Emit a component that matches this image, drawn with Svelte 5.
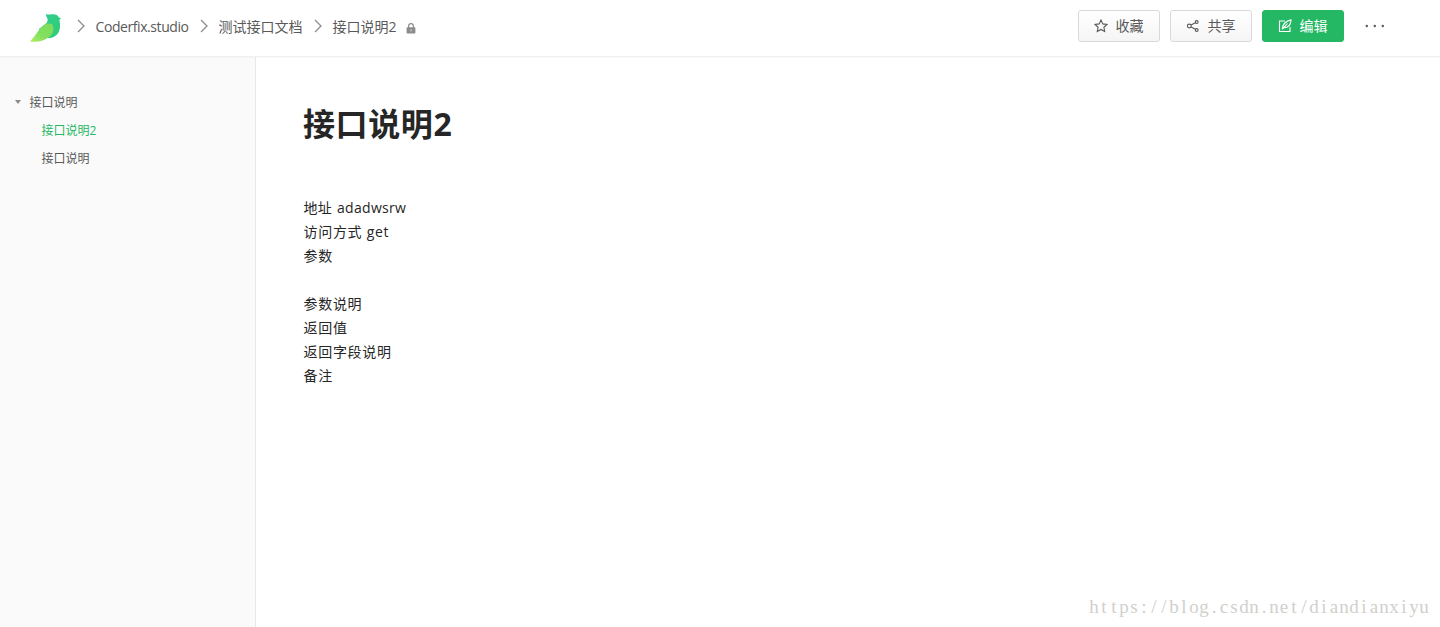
<script lang="ts">
	const crumbs = ['Coderfix.studio', '测试接口文档', '接口说明2'];

	const title = '接口说明2';

	const toc = [
		{ label: '接口说明', level: 0, active: false },
		{ label: '接口说明2', level: 1, active: true },
		{ label: '接口说明', level: 1, active: false }
	];

	const lines = ['地址 adadwsrw', '访问方式 get', '参数', '', '参数说明', '返回值', '返回字段说明', '备注'];

	const watermark = 'https://blog.csdn.net/diandianxiyu';
	// one 10px cell per character
	const cells = [...watermark].map((_, i) => i * 10 + 5).join(' ');
</script>

<div class="page">
	<header class="header">
		<svg class="logo" width="32" height="32" viewBox="0 0 32 32">
			<defs>
				<linearGradient id="body" x1="0" y1="0" x2="1" y2="1">
					<stop offset="0" stop-color="#2fce94" />
					<stop offset="1" stop-color="#31cc72" />
				</linearGradient>
				<linearGradient id="wing" x1="1" y1="0" x2="0" y2="1">
					<stop offset="0" stop-color="#7ddc5c" />
					<stop offset="0.6" stop-color="#83e05f" />
					<stop offset="1" stop-color="#b5ee62" />
				</linearGradient>
			</defs>
			<path
				fill="url(#body)"
				d="M15.800 1.900c2 .9 3.700.6 5.600.4 3.500-.5 6.300.1 7.400 3.200l2.500.8c-1.400.6-1.900 1.200-1.800 2.300.1 1.400.6 2.900.6 5.400 0 6.500-4.500 11.900-10.600 12H9V17l7-5.500c1.200-1.200 1.900-2.700 1.600-4.200C17.300 5.500 16 4.200 15.800 1.900z"
			/>
			<path
				fill="url(#wing)"
				d="M0 29.600C4 25.500 7 20.500 10.500 16.300L15.200 11.900c2.300-.7 4.900-.5 7 .3 2 3.500 1.600 7.300-.8 10.500C17.500 27.300 9.500 30.900 0 29.600z"
			/>
		</svg>

		<nav class="crumbs">
			{#each crumbs as crumb, index}
				<svg class="crumbs__arrow" width="8" height="14" viewBox="0 0 8 14">
					<path d="M1 1l6 6-6 6" />
				</svg>
				<span class="crumbs__item" class:crumbs__item--space={index === 0}>{crumb}</span>
			{/each}
			<svg class="lock" width="10" height="11" viewBox="0 0 10 11">
				<path d="M2.600 5V3.100a2.400 2.400 0 0 1 4.800 0V5" fill="none" stroke="#8c8c8c" stroke-width="1.200" />
				<rect x="0.600" y="4.300" width="8.800" height="6.200" rx="0.800" fill="#8c8c8c" />
				<path d="M5 6.300v2" stroke="#fff" stroke-width="0.800" />
			</svg>
		</nav>

		<div class="actions">
			<button class="btn">
				<svg width="14" height="14" viewBox="0 0 14 14">
					<path d="M7 1l1.800 3.900 4.200.5-3.100 2.900.8 4.200L7 10.400l-3.700 2.100.8-4.200L1 5.400l4.200-.5z" />
				</svg>
				<span>收藏</span>
			</button>
			<button class="btn">
				<svg width="14" height="14" viewBox="0 0 14 14">
					<circle cx="3.300" cy="7" r="1.900" />
					<circle cx="10.700" cy="3" r="1.400" />
					<circle cx="10.700" cy="11" r="1.400" />
					<path d="M5 6.100l4.400-2.400M5 7.900l4.400 2.400" />
				</svg>
				<span>共享</span>
			</button>
			<button class="btn btn--primary">
				<svg width="14" height="14" viewBox="0 0 14 14">
					<path d="M7 2H1.500v10.500H12V8M4.300 10.300C4.500 6 7 2.300 13 .9c-.2 4.800-2.600 7.600-7 7.700M4.300 10.300L9.500 4.500" />
				</svg>
				<span>编辑</span>
			</button>
			<svg class="more" width="20" height="4" viewBox="0 0 20 4">
				<circle cx="1.800" cy="2" r="1.200" />
				<circle cx="9.800" cy="2" r="1.200" />
				<circle cx="17.800" cy="2" r="1.200" />
			</svg>
		</div>
	</header>

	<div class="main">
		<aside class="sidebar">
			<ul class="toc">
				{#each toc as item}
					<li class="toc__item" class:toc__item--child={item.level > 0} class:toc__item--active={item.active}>
						{#if item.level === 0}
							<span class="toc__caret"></span>
						{/if}
						{item.label}
					</li>
				{/each}
			</ul>
		</aside>

		<article class="doc">
			<h1>{title}</h1>
			{#each lines as line, index}
				<p class:tight={index === 0}>{line}</p>
			{/each}
		</article>
	</div>

	<svg class="watermark" width="340" height="28">
		<text x={cells} y="18">{watermark}</text>
	</svg>
</div>

<style>
	:global(body) {
		margin: 0;
		background: #fff;
	}

	.page {
		position: relative;
		display: flex;
		flex-direction: column;
		height: 627px;
		overflow: hidden;
		font-family: 'Open Sans', 'Noto Sans CJK SC', sans-serif;
		font-size: 14px;
		color: #595959;
	}

	.header {
		display: flex;
		align-items: center;
		box-sizing: border-box;
		height: 57px;
		padding: 0 55px 4px 30px;
		border-bottom: 1px solid #f0f0f0;
		box-shadow: 0 1px 1px rgba(0, 0, 0, 0.02);
		z-index: 1;
	}

	.logo {
		margin-top: 3px;
	}

	.crumbs {
		display: flex;
		align-items: center;
		margin-left: 14.5px;
	}

	.crumbs__arrow {
		margin-right: 11px;
		fill: none;
		stroke: #8c8c8c;
		stroke-width: 1.3;
	}

	.crumbs__item {
		margin: 2px 11px 0 0;
		line-height: 20px;
		white-space: nowrap;
	}

	.crumbs__item--space {
		letter-spacing: -0.42px;
	}

	.lock {
		margin: 4px 0 0 -2px;
	}

	.actions {
		display: flex;
		align-items: center;
		gap: 10px;
		margin-left: auto;
	}

	.btn {
		display: flex;
		align-items: center;
		justify-content: center;
		gap: 8px;
		box-sizing: border-box;
		width: 82px;
		height: 32px;
		padding: 0 1px 0 0;
		border: 1px solid #d9d9d9;
		border-radius: 3px;
		background: linear-gradient(#fff, #f5f5f5);
		font: inherit;
		line-height: 20px;
		color: #595959;
	}

	.btn svg {
		fill: none;
		stroke: currentColor;
		stroke-width: 1.1;
	}

	.btn--primary {
		border-color: #25b864;
		background: #25b864;
		color: #fff;
	}

	.more {
		margin-left: 11px;
		fill: #595959;
	}

	.main {
		display: flex;
		flex: 1;
	}

	.sidebar {
		box-sizing: border-box;
		width: 256px;
		padding-top: 32px;
		border-right: 1px solid #e8e8e8;
		background: #fafafa;
	}

	.toc {
		margin: 0;
		padding: 0;
		list-style: none;
		font-size: 12px;
		line-height: 28px;
	}

	.toc__item {
		display: flex;
		align-items: center;
		height: 28px;
		padding-left: 15px;
	}

	.toc__item--child {
		padding-left: 41.5px;
	}

	.toc__item--active {
		color: #25b864;
	}

	.toc__caret {
		margin: -2px 8.5px 0 0;
		border: 3px solid transparent;
		border-top: 4px solid #8c8c8c;
		border-bottom: 0;
	}

	.doc {
		flex: 1;
		padding: 43px 47px;
		color: #262626;
		letter-spacing: 0.7px;
	}

	h1 {
		margin: 0 0 48px;
		font-size: 32px;
		line-height: 48px;
		letter-spacing: 0.6px;
	}

	p {
		height: 24px;
		margin: 0 0 0 0.5px;
		line-height: 24px;
	}

	.tight {
		letter-spacing: 0.3px;
		word-spacing: 1px;
	}

	.watermark {
		position: absolute;
		right: 11px;
		bottom: 4px;
		font-family: 'Liberation Serif', serif;
		font-size: 19px;
		text-anchor: middle;
		fill: #d0d0cc;
	}
</style>
